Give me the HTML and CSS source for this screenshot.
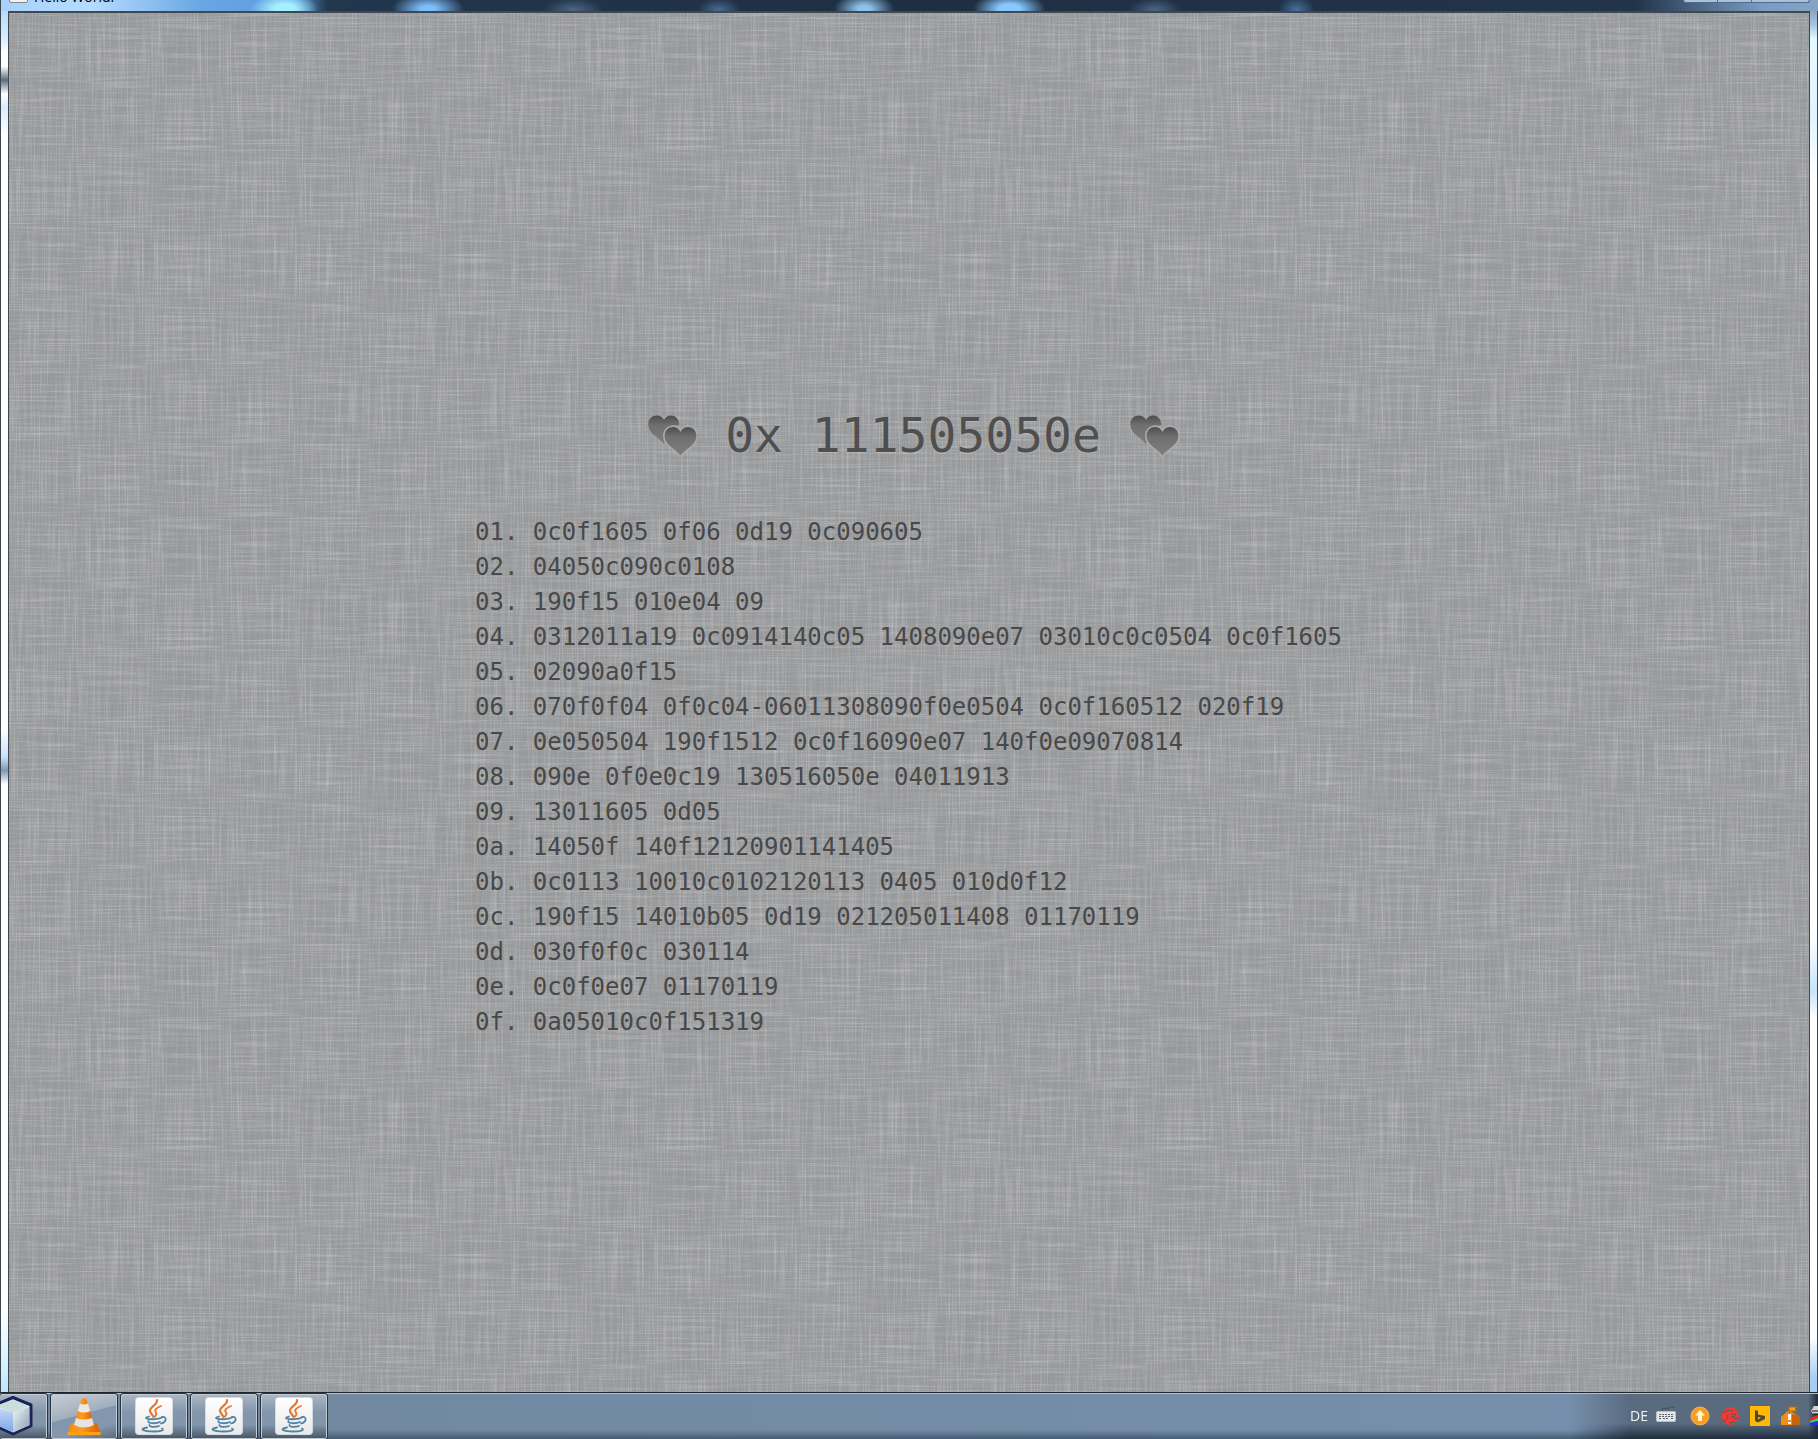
FILE: index.html
```html
<!DOCTYPE html>
<html lang="en">
<head>
<meta charset="utf-8">
<title>Hello World!</title>
<link rel="stylesheet" href="styles.css">
</head>
<body>
<svg class="defs" aria-hidden="true">
  <defs>
    <linearGradient id="heartFill" x1="0" y1="0" x2="0" y2="1">
      <stop offset="0" stop-color="#4e4e4e"/><stop offset=".35" stop-color="#707070"/><stop offset="1" stop-color="#7e7e7e"/>
    </linearGradient>
    <linearGradient id="cone" x1="0" y1="0" x2="1" y2="0">
      <stop offset="0" stop-color="#f58a0c"/><stop offset=".4" stop-color="#ff9a1c"/><stop offset="1" stop-color="#d95f00"/>
    </linearGradient>
    <linearGradient id="tile" x1="0" y1="0" x2="0" y2="1">
      <stop offset="0" stop-color="#ffffff"/><stop offset="1" stop-color="#e9e9e9"/>
    </linearGradient>
    <linearGradient id="cubeLeft" x1="0" y1="0" x2="0" y2="1">
      <stop offset="0" stop-color="#c6daf8"/><stop offset="1" stop-color="#7ea6ea"/>
    </linearGradient>
    <linearGradient id="cubeRight" x1="0" y1="0" x2="1" y2="1">
      <stop offset="0" stop-color="#eef6f8"/><stop offset="1" stop-color="#8b9fb0"/>
    </linearGradient>
    <symbol id="hearts" viewBox="0 0 44 38">
      <path d="M15 27C12 21 1 18 1 9 1 0 12-1 15 5 18-1 28.500 0 28.500 10 22 10 15 17 15 27Z" fill="url(#heartFill)"/>
      <path d="M29.500 37C26 31 15.500 28 15.500 19.500 15.500 10 27 9 29.500 16 32 9 43.500 10 43.500 19.500 43.500 28 33 31 29.500 37Z" fill="url(#heartFill)" stroke="#a9abad" stroke-width="3" paint-order="stroke"/>
    </symbol>
    <symbol id="java" viewBox="0 0 38 38">
      <rect x=".5" y=".5" width="37" height="37" rx="3" fill="url(#tile)" stroke="#d4dae0"/>
      <g fill="none" stroke="#e8762b" stroke-linecap="round">
        <path d="M22 3C23 8 14 10 15 14 15.500 17 18 18 18.500 20" stroke-width="2.200"/>
        <path d="M26 9C21 11 19 13 21 15.500 22 17 21 18.500 20 19.500" stroke-width="1.800"/>
      </g>
      <g fill="none" stroke="#5382a1" stroke-linecap="round" stroke-width="1.800">
        <path d="M14 19.500C7 21.500 14 22.500 20 22.200 24 22 26 21 27 20.500"/>
        <path d="M13.500 24C12 26.500 21 27 25 25"/>
        <path d="M14.500 28C14 30 20 30.500 24 29"/>
        <path d="M27 20C32 19 32 25 26 26.500"/>
        <path d="M12 30.500C3 32 9 34.500 18 34.500 26 34.500 30 33 27 31.500"/>
      </g>
    </symbol>
  </defs>
</svg>

<header class="titlebar">
  <div class="caption"><span class="app-icon"></span><span class="caption-text">Hello World!</span></div>
  <div class="window-buttons">
    <button aria-label="Minimize"></button><button aria-label="Maximize"></button><button class="close" aria-label="Close"></button>
  </div>
</header>

<div class="frame">
  <main class="linen">
    <div class="sheet">
      <h1><svg class="hearts" aria-hidden="true"><use href="#hearts"/></svg><span class="engraved">0x 111505050e</span><svg class="hearts" aria-hidden="true"><use href="#hearts"/></svg></h1>
      <ul class="tracks">
        <li>01. 0c0f1605 0f06 0d19 0c090605</li>
        <li>02. 04050c090c0108</li>
        <li>03. 190f15 010e04 09</li>
        <li>04. 0312011a19 0c0914140c05 1408090e07 03010c0c0504 0c0f1605</li>
        <li>05. 02090a0f15</li>
        <li>06. 070f0f04 0f0c04-06011308090f0e0504 0c0f160512 020f19</li>
        <li>07. 0e050504 190f1512 0c0f16090e07 140f0e09070814</li>
        <li>08. 090e 0f0e0c19 130516050e 04011913</li>
        <li>09. 13011605 0d05</li>
        <li>0a. 14050f 140f12120901141405</li>
        <li>0b. 0c0113 10010c0102120113 0405 010d0f12</li>
        <li>0c. 190f15 14010b05 0d19 021205011408 01170119</li>
        <li>0d. 030f0f0c 030114</li>
        <li>0e. 0c0f0e07 01170119</li>
        <li>0f. 0a05010c0f151319</li>
      </ul>
    </div>
  </main>
</div>

<footer class="taskbar">
  <nav class="tasks" aria-label="Running programs">
    <button class="task first" aria-label="NetBeans">
      <svg width="33" height="40" viewBox="0 0 33 40"><path d="M-5 9 13 1.500 31 9 31 30 13 38 -5 30Z" fill="#e3eff5" stroke="#1d2258" stroke-width="3" stroke-linejoin="round"/><path d="M-4 10 13 4 29 10 13 17Z" fill="#c8dfdc"/><path d="M-4 11 13 17 13 36-4 29Z" fill="url(#cubeLeft)"/><path d="M29 11 13 17 13 36 29 29Z" fill="url(#cubeRight)"/></svg>
    </button>
    <button class="task active" aria-label="VLC">
      <svg width="34" height="39" viewBox="0 0 34 39"><path d="M4 26 30 26 33.500 37.500 .5 37.500Z" fill="url(#cone)"/><path d="M.5 35H33.500V38H.5Z" fill="#ff9f16"/><path d="M14.500 2Q17 0 19.500 2L27 28Q17 33 7 28Z" fill="url(#cone)"/><path d="M13 6.500Q17 8.500 21 6.500L23.200 14Q17 17 10.800 14Z" fill="#e9e9e7"/><path d="M9 21Q17 24 25 21L27 28Q17 33 7 28Z" fill="#e4e4e2"/></svg>
    </button>
    <button class="task" aria-label="Java"><svg width="38" height="38"><use href="#java"/></svg></button>
    <button class="task" aria-label="Java"><svg width="38" height="38"><use href="#java"/></svg></button>
    <button class="task" aria-label="Java"><svg width="38" height="38"><use href="#java"/></svg></button>
  </nav>
  <div class="tray">
    <span class="lang">DE</span>
    <svg class="keyboard" width="20" height="16" viewBox="0 0 20 16"><path d="M6 5C6 0 10 4 13 2 15 0 17 1 19 2" fill="none" stroke="#46515c" stroke-width="1.200"/><rect x=".5" y="5.500" width="19" height="10" rx="1" fill="#e4e6e8" stroke="#b9bec3"/><path d="M3 8.500H17M3 10.500H17M3 12.500H5M7 12.500H13M15 12.500H17" stroke="#5a6066" stroke-dasharray="2 1"/></svg>
    <svg width="20" height="20" viewBox="0 0 20 20"><circle cx="10" cy="10" r="9" fill="#fb9d23" stroke="#f6b655"/><path d="M10 4 15 9.500H12V15H8V9.500H5Z" fill="#fff5cf"/></svg>
    <svg width="20" height="20" viewBox="0 0 20 20"><circle cx="10" cy="10" r="8.500" fill="#f13b30" stroke="#f13b30" stroke-dasharray="3 1"/><path d="M2 7Q7 3 13 5M8 8 7 14M11 8Q17 7 15 10 13 12 11 10M2 13 6 16M14 13 18 12M9 17 15 16" fill="none" stroke="#6d5560" stroke-width="1.300"/></svg>
    <svg width="20" height="20" viewBox="0 0 20 20"><rect width="20" height="20" fill="#ffb902"/><path fill-rule="evenodd" d="M5 4 8 5V8.500L15 10V13L8 16.500 5 15ZM8 11V13.500L11 11.700Z" fill="#4d4a36"/></svg>
    <svg width="22" height="20" viewBox="0 0 22 20"><path d="M1 19V11L9 4 18 10V19Z" fill="#f58d13"/><path d="M12 8 20 10V19H12Z" fill="#c9620a"/><path d="M9 9V0M9 1H17L15 3 17 5H9" fill="#f5a11c" stroke="#b4690c"/><path d="M9.500 8V14M9.500 16V18" stroke="#fff" stroke-width="3"/></svg>
    <svg class="edge-icon" width="8" height="20" viewBox="0 0 8 20"><path d="M8 0H4L1 5 3 8H8Z" fill="#d4d4d4"/><path d="M2 5H8M3 8H8" stroke="#111"/><path d="M0 12 8 9V12L0 15Z" fill="#e22"/><path d="M0 15 8 12V15L0 17Z" fill="#3bd65a"/><path d="M0 17 8 15V19H0Z" fill="#2330d8"/></svg>
  </div>
</footer>
</body>
</html>
```
FILE: styles.css
```css
* { box-sizing: border-box; }

body {
  margin: 0;
  min-height: 100vh;
  display: flex;
  flex-direction: column;
  overflow-x: hidden;
  background: #fff;
  font-family: "Open Sans", sans-serif;
}

.defs { position: absolute; width: 0; height: 0; }

button { border: 0; padding: 0; margin: 0; background: none; }

/* Glass title bar, scrolled almost out of view */
.titlebar {
  flex: none;
  height: 11px;
  display: flex;
  justify-content: space-between;
  align-items: flex-start;
  overflow: hidden;
  padding: 0 8px 0 8px;
  border-left: 1px solid #3c4650;
  background:
    radial-gradient(ellipse 34px 16px at 15.600% 80%, #a5efff 30%, transparent),
    radial-gradient(ellipse 36px 16px at 23.500% 80%, #7dbdfa 20%, transparent),
    radial-gradient(ellipse 30px 12px at 31.500% 90%, #4d6584, transparent),
    radial-gradient(ellipse 22px 12px at 39.500% 90%, #4a6a8f, transparent),
    radial-gradient(ellipse 30px 16px at 47.500% 80%, #8dc2ea 20%, transparent),
    radial-gradient(ellipse 36px 16px at 55.500% 80%, #86c8ff 30%, transparent),
    radial-gradient(ellipse 26px 12px at 63.500% 90%, #4b6784, transparent),
    radial-gradient(ellipse 18px 14px at 71.300% 90%, #45729f, transparent),
    linear-gradient(90deg, #a9d0fa, #b5dcff 5%, #69a6e4 11%, #5d9be0 16%, #22364d 18%, #1f2f42 50%, #22344a 90%, #7a9dc4 97%, #86a3c3);
}

.caption {
  display: flex;
  align-items: flex-end;
  gap: 6px;
  height: 3px;
}

.app-icon {
  width: 19px;
  height: 19px;
  border: 1px solid #7f8890;
  border-radius: 2px;
  background: #f1f1f1;
}

.caption-text {
  height: 20px;
  line-height: 20px;
  margin-bottom: -4px;
  font-size: 14px;
  color: #000;
}

.window-buttons { display: flex; height: 3px; }

.window-buttons button {
  width: 34px;
  border: 1px solid #536b84;
  border-top: 0;
  border-right: 0;
  background: #a4c4de;
}

.window-buttons button:first-child { border-bottom-left-radius: 4px; }

.window-buttons .close {
  width: 59px;
  border-right: 1px solid #536b84;
  border-bottom-right-radius: 4px;
}

/* Side borders of the window */
.frame {
  flex: 1;
  display: flex;
  padding: 0 7px;
  border: solid #3c4650;
  border-width: 0 1px;
  background:
    linear-gradient(180deg, #b9dafa 0, #d9eefe 2%, #fff 3%, #fff 4%, #5c6c7c 5%, #fff 6%, #d8edff 7%, #fff 9%, #fff 52%, #c9e3fa 54%, #7f97b0 55%, #fff 56%, #fff 94%, #d5f2ff 98%, #bfe4ff) left / 8px 100% no-repeat,
    linear-gradient(180deg, #89a5c2 0, #a8c5de 1%, #e2fbff 2%, #dff5ff 8%, #fff 12%, #fff 67%, #c6e4fb 71%, #fff 73%, #fff 96%, #a9cdf0 99%) right / 8px 100% no-repeat;
}

.linen {
  flex: 1;
  padding: 387px 24px 60px 32px;
  display: flex;
  justify-content: center;
  align-items: flex-start;
  border: 1px solid #3d4852;
  border-top-width: 2px;
  border-bottom: 0;
  background-color: #98999b;
  background-image:
    url("data:image/svg+xml,%3Csvg xmlns='http://www.w3.org/2000/svg' width='500' height='500'%3E%3Cfilter id='h' x='0' y='0' width='100%25' height='100%25'%3E%3CfeTurbulence type='fractalNoise' baseFrequency='.014 .6' numOctaves='3' seed='4' stitchTiles='stitch'/%3E%3CfeColorMatrix values='0 0 0 0 1 0 0 0 0 1 0 0 0 0 1 .5 0 0 0 -.22'/%3E%3C/filter%3E%3Cfilter id='v' x='0' y='0' width='100%25' height='100%25'%3E%3CfeTurbulence type='fractalNoise' baseFrequency='.6 .014' numOctaves='3' seed='9' stitchTiles='stitch'/%3E%3CfeColorMatrix values='0 0 0 0 1 0 0 0 0 1 0 0 0 0 1 .5 0 0 0 -.22'/%3E%3C/filter%3E%3Cfilter id='d' x='0' y='0' width='100%25' height='100%25'%3E%3CfeTurbulence type='fractalNoise' baseFrequency='.3 .5' numOctaves='2' seed='2' stitchTiles='stitch'/%3E%3CfeColorMatrix values='0 0 0 0 .25 0 0 0 0 .25 0 0 0 0 .25 .5 0 0 0 -.21'/%3E%3C/filter%3E%3Crect width='500' height='500' filter='url(%23d)'/%3E%3Crect width='500' height='500' filter='url(%23h)'/%3E%3Crect width='500' height='500' filter='url(%23v)'/%3E%3C/svg%3E");
}

.sheet {
  width: 876px;
  max-width: 100%;
}

h1 {
  margin: 0 0 45px;
  display: flex;
  justify-content: center;
  align-items: center;
  gap: 28px;
  font: 400 48px/70px "DejaVu Sans Mono", monospace;
}

.engraved {
  color: #4f4f4f;
  text-shadow: 0 1px 1px rgba(255, 255, 255, .25);
}

.hearts {
  width: 50px;
  height: 43px;
}

.tracks {
  margin: 0;
  padding: 0;
  list-style: none;
  font: 400 24px/35px "DejaVu Sans Mono", monospace;
  color: #484848;
}

.taskbar {
  flex: none;
  height: 47px;
  display: flex;
  justify-content: space-between;
  overflow: hidden;
  border-top: 1px solid #20262e;
  box-shadow: inset 0 1px #b4c0cc;
  background:
    linear-gradient(180deg, transparent 80%, rgba(40, 60, 82, .6)),
    linear-gradient(90deg, #71879f, #7690ad);
}

.tasks { display: flex; gap: 4px; padding-top: 1px; }

.task {
  width: 66px;
  height: 45px;
  display: flex;
  align-items: center;
  justify-content: center;
  padding-bottom: 1px;
  border: 1px solid #c3ccd5;
  border-radius: 2px;
  outline: 1px solid #28333f;
  background: linear-gradient(180deg, #a9b6c4, #8496aa 40%, #8095ac 70%, #475868);
}

.task.active { background: linear-gradient(165deg, #c6ced6, #a1aebb 45%, #8296ad 46%, #8497ad 75%, #5b6a79); }

.task.first {
  width: 47px;
  justify-content: flex-start;
  border-left: 0;
}

.tray {
  display: flex;
  align-items: center;
  gap: 10px;
  padding: 0 0 2px 60px;
  margin-top: 1px;
  background:
    linear-gradient(180deg, transparent 65%, #1f2d3c),
    linear-gradient(90deg, #5a6b80 96%, #222b35);
  -webkit-mask-image: linear-gradient(90deg, transparent, #000 60px);
  mask-image: linear-gradient(90deg, transparent, #000 60px);
}

.lang {
  font-size: 14px;
  line-height: 20px;
  color: #eef2f5;
  margin-right: -2px;
}

.keyboard { margin: -4px 4px 0 0; }

.edge-icon { margin-left: -2px; }
```
